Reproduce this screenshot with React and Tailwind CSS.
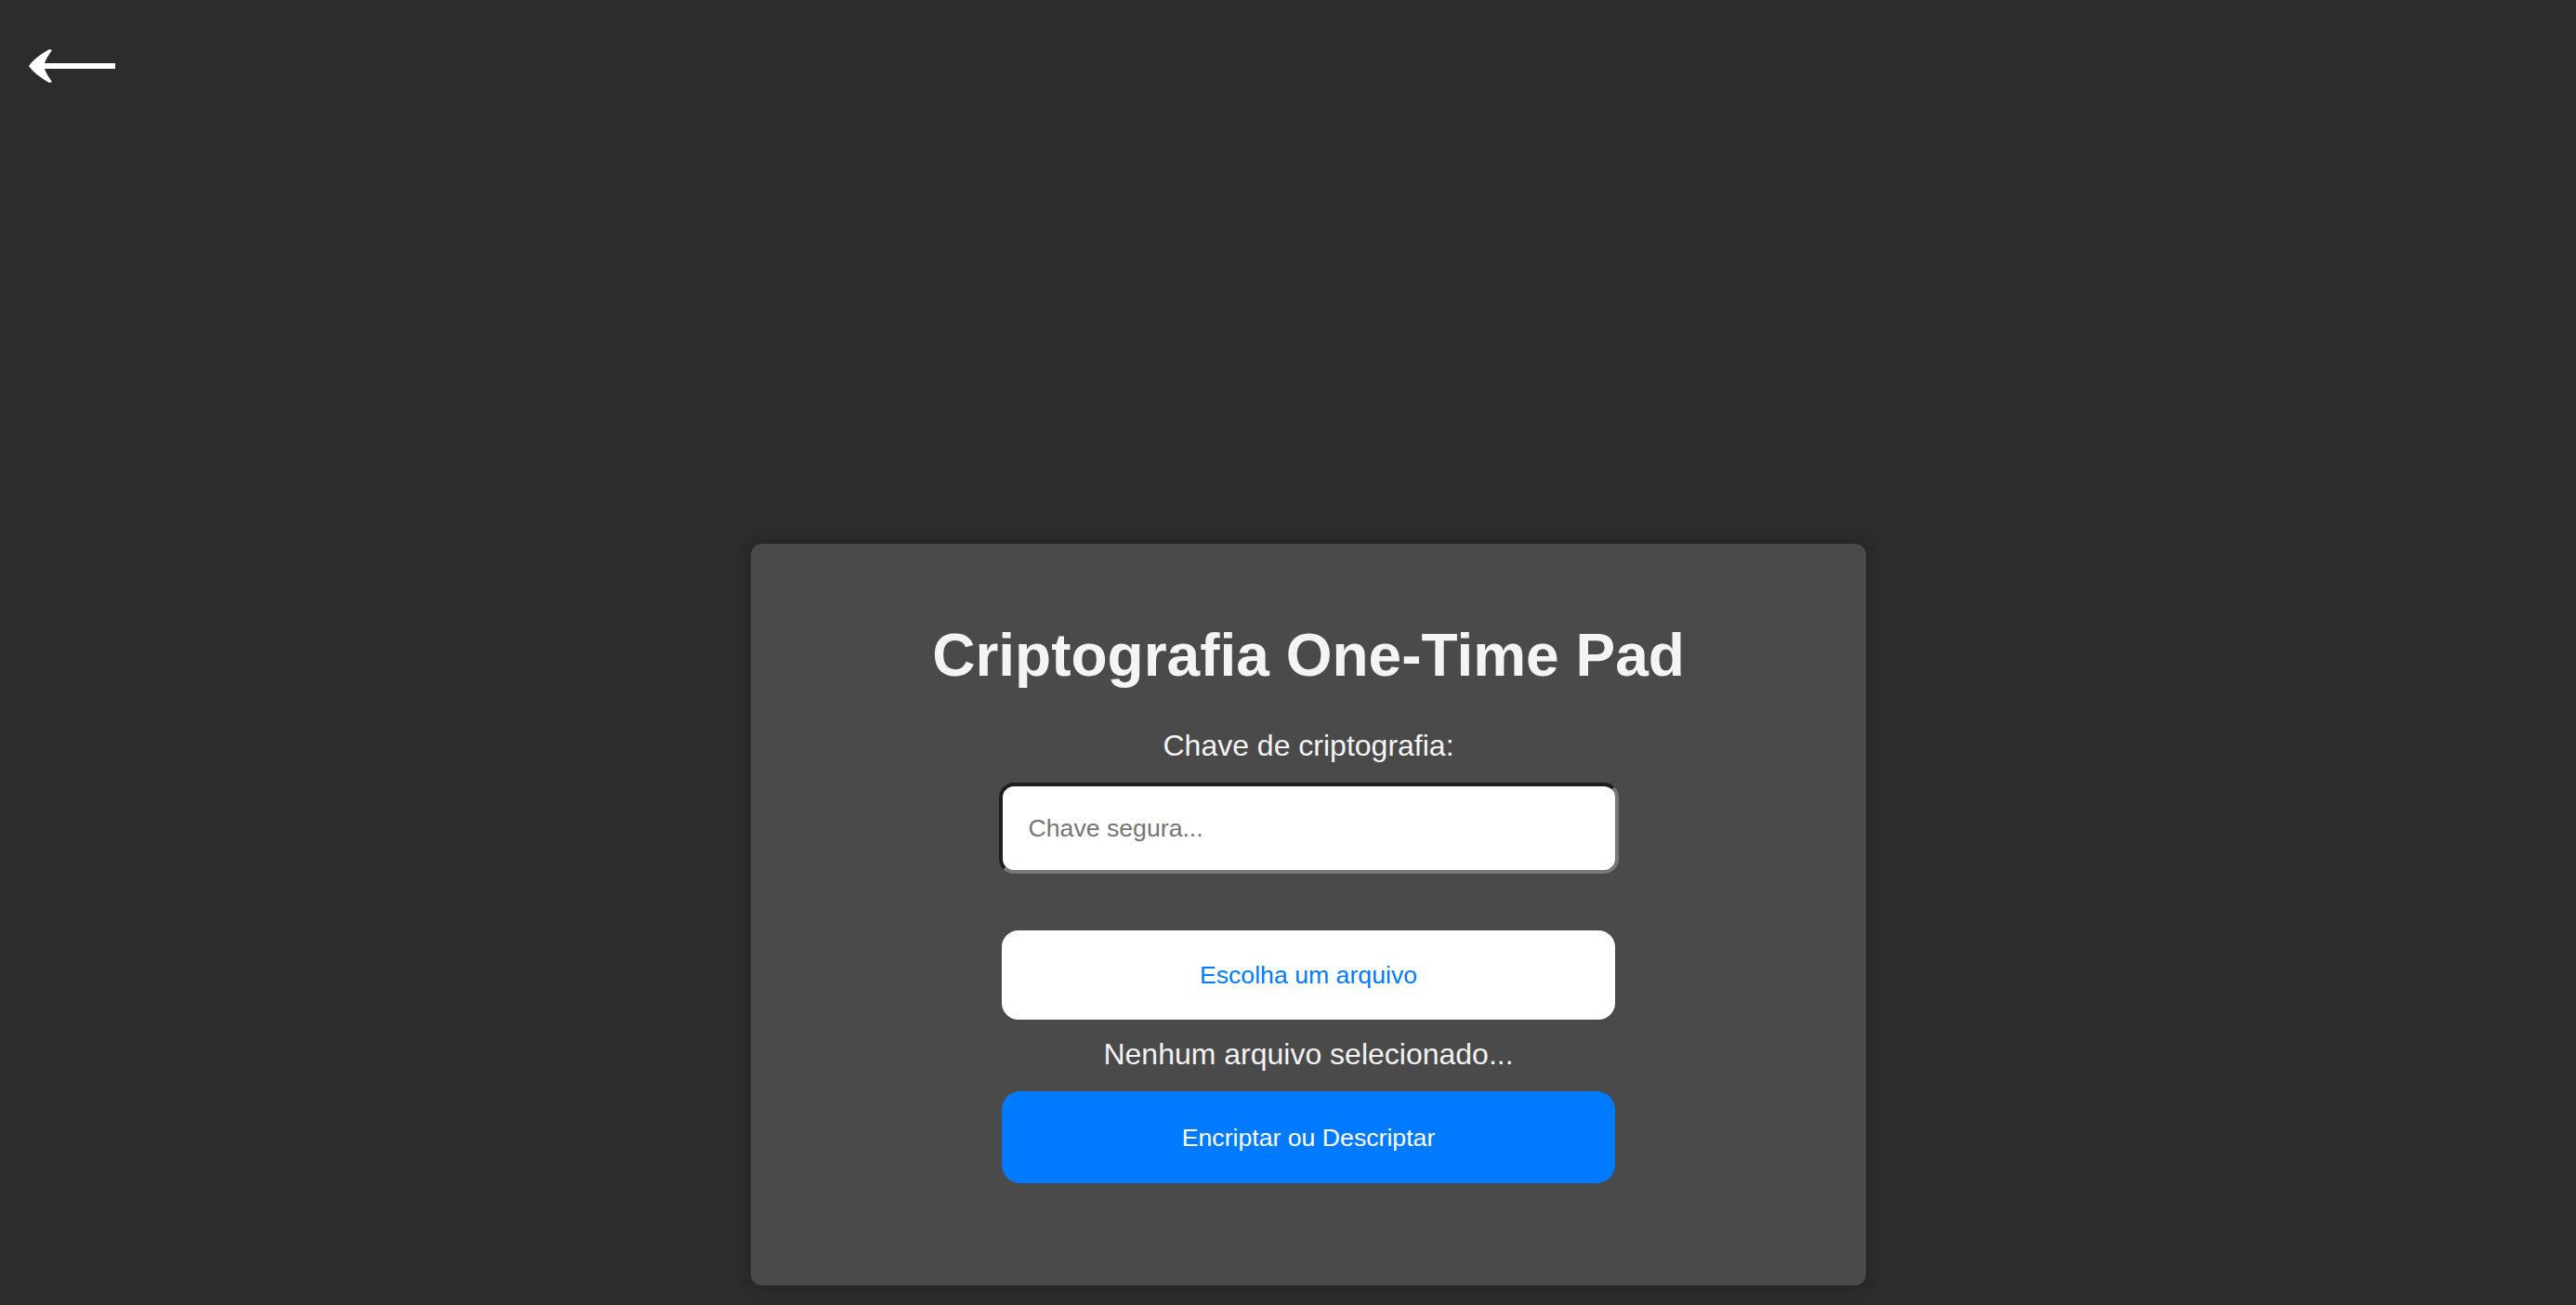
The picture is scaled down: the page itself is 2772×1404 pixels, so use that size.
import React, { useState } from 'react';

const BackArrow = () => (
  <svg width="93" height="36" viewBox="31 53 93 36" className="block">
    <path
      d="M31 71 Q37 62 53 53 L56 54 Q50 62 48 68 L124 68 L124 74 L48 74 Q50 80 56 88 L53 89 Q37 80 31 71 Z"
      fill="#ffffff"
    />
  </svg>
);

const App = () => {
  const [key, setKey] = useState('');
  const [fileName] = useState('');

  return (
    <div className="min-h-screen bg-[#2c2c2c] font-['Liberation_Sans',Arial,sans-serif] flex flex-col">
      <div className="pl-[31px] pt-[53px]">
        <button className="block cursor-pointer" aria-label="Voltar">
          <BackArrow />
        </button>
      </div>

      <div className="flex justify-center pl-[44px] mt-[496px]">
        <div className="w-[1200px] bg-[#4a4a4a] rounded-[12px] shadow-[0_0_16px_rgba(0,0,0,0.25)] pt-[40px] pb-[110px] flex flex-col items-center">
          <h1 className="mt-[43px] mb-[42px] text-[64px] leading-[74px] font-bold text-[#f4f4f4]">
            Criptografia One-Time Pad
          </h1>
          <label className="text-[32px] leading-[37px] text-[#f4f4f4]">Chave de criptografia:</label>
          <input
            type="text"
            value={key}
            onChange={(e) => setKey(e.target.value)}
            placeholder="Chave segura..."
            className="mt-[21px] w-[667px] h-[98px] bg-white rounded-[16px] border-4 border-t-[#1e1e1e] border-l-[#1e1e1e] border-r-[#777777] border-b-[#777777] px-[28px] text-[26.67px] text-black placeholder:text-[#757575] outline-none"
          />
          <button className="mt-[61px] w-[660px] h-[96px] bg-white rounded-[18px] text-[26.67px] text-[#007bff] cursor-pointer">
            Escolha um arquivo
          </button>
          <p className="mt-[19px] text-[32px] leading-[37px] text-[#f2f2f2]">
            {fileName || 'Nenhum arquivo selecionado...'}
          </p>
          <button className="mt-[21px] w-[660px] h-[99px] bg-[#007bff] rounded-[20px] text-[26.67px] text-white cursor-pointer">
            Encriptar ou Descriptar
          </button>
        </div>
      </div>
    </div>
  );
};

export default App;
